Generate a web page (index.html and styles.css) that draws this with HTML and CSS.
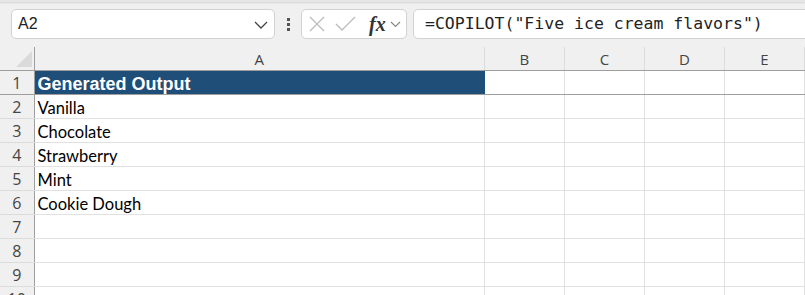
FILE: index.html
```html
<!DOCTYPE html>
<html lang="en">
  <head>
    <meta charset="UTF-8" />
    <title>Copilot sheet</title>
    <link rel="stylesheet" href="styles.css">
  </head>
  <body>
    <div class="ribbon-edge"></div>

    <div class="formula-bar">
      <div class="name-box">
        <span>A2</span>
        <svg class="chevron" width="14" height="8" viewBox="0 0 14 8">
          <path d="M1 1 L7 7 L13 1" fill="none" stroke="#444" stroke-width="1.3" />
        </svg>
      </div>

      <div class="more">
        <span></span><span></span><span></span>
      </div>

      <div class="fx-buttons">
        <svg width="18" height="18" viewBox="0 0 18 18">
          <path d="M2 2 L16 16 M16 2 L2 16" stroke="#bdbdbd" stroke-width="1.4" />
        </svg>
        <svg width="21" height="18" viewBox="0 0 21 18">
          <path d="M1 9 L7 15 L20 2" fill="none" stroke="#bdbdbd" stroke-width="1.4" />
        </svg>
        <span class="fx">fx</span>
        <svg width="11" height="7" viewBox="0 0 11 7">
          <path d="M1 1 L5.5 5.5 L10 1" fill="none" stroke="#888" stroke-width="1.2" />
        </svg>
      </div>

      <div class="formula-input">=COPILOT("Five ice cream flavors")</div>
    </div>

    <table class="sheet">
      <colgroup>
        <col class="col-rows" />
        <col class="col-a" />
        <col class="col-n" />
        <col class="col-n" />
        <col class="col-n" />
        <col class="col-n" />
      </colgroup>
      <thead>
        <tr>
          <th class="corner"><div class="triangle"></div></th>
          <th>A</th>
          <th>B</th>
          <th>C</th>
          <th>D</th>
          <th>E</th>
        </tr>
      </thead>
      <tbody>
        <tr class="frozen">
          <th>1</th>
          <td class="title">Generated Output</td>
          <td></td><td></td><td></td><td></td>
        </tr>
        <tr><th>2</th><td>Vanilla</td><td></td><td></td><td></td><td></td></tr>
        <tr><th>3</th><td>Chocolate</td><td></td><td></td><td></td><td></td></tr>
        <tr><th>4</th><td>Strawberry</td><td></td><td></td><td></td><td></td></tr>
        <tr><th>5</th><td>Mint</td><td></td><td></td><td></td><td></td></tr>
        <tr><th>6</th><td>Cookie Dough</td><td></td><td></td><td></td><td></td></tr>
        <tr><th>7</th><td></td><td></td><td></td><td></td><td></td></tr>
        <tr><th>8</th><td></td><td></td><td></td><td></td><td></td></tr>
        <tr><th>9</th><td></td><td></td><td></td><td></td><td></td></tr>
        <tr><th>10</th><td></td><td></td><td></td><td></td><td></td></tr>
      </tbody>
    </table>
  </body>
</html>
```

FILE: styles.css
```css
body {
  margin: 0;
  background-color: #f0f0f0;
  font-family: "Open Sans", sans-serif;
  overflow: hidden;
}
.ribbon-edge {
  height: 2px;
  background: #e6e6e6;
  box-shadow: 0 1px 2px rgba(0, 0, 0, 0.12);
}
.formula-bar {
  display: flex;
  align-items: center;
  height: 30px;
  margin-top: 7px;
  padding-left: 11px;
}
.name-box {
  display: flex;
  align-items: center;
  justify-content: space-between;
  box-sizing: border-box;
  width: 264px;
  height: 30px;
  padding: 0 6px 0 6px;
  background: white;
  border: 1px solid #d1d1d1;
  border-radius: 5px;
  font-family: "Liberation Sans", Arial, sans-serif;
  font-size: 16px;
  color: #222;
}
.chevron {
  margin-top: 1px;
}
.more {
  display: flex;
  flex-direction: column;
  gap: 2px;
  width: 26px;
  align-items: center;
}
.more span {
  display: block;
  width: 3px;
  height: 3px;
  background: #555;
}
.fx-buttons {
  display: flex;
  align-items: center;
  box-sizing: border-box;
  width: 106px;
  height: 30px;
  padding-left: 6px;
  gap: 9px;
  background: white;
  border: 1px solid #d1d1d1;
  border-radius: 5px;
}
.fx {
  font-family: "Liberation Serif", "Times New Roman", serif;
  font-style: italic;
  font-weight: bold;
  font-size: 20px;
  color: #333;
  margin-left: 4px;
  margin-right: -5px;
}
.formula-input {
  box-sizing: border-box;
  flex: 1;
  height: 30px;
  margin-left: 6px;
  margin-right: -6px;
  padding-left: 11px;
  line-height: 28px;
  background: white;
  border: 1px solid #d1d1d1;
  border-radius: 5px;
  font-family: "DejaVu Sans Mono", monospace;
  font-size: 16.5px;
  color: #222;
  white-space: nowrap;
}
.sheet {
  margin-top: 8px;
  border-collapse: collapse;
  table-layout: fixed;
  width: 805px;
  background: white;
}
.col-rows {
  width: 34px;
}
.col-a {
  width: 450px;
}
.col-n {
  width: 80px;
}
.sheet th {
  background: #f0f0f0;
  font-weight: normal;
  font-size: 15px;
  color: #444;
  padding: 0;
}
.sheet thead th {
  height: 23px;
  border-right: 1px solid #dcdcdc;
  border-bottom: 1px solid #9e9e9e;
  vertical-align: middle;
  line-height: 20px;
}
.sheet thead th.corner {
  border-right: 1px solid #9e9e9e;
  position: relative;
}
.triangle {
  position: absolute;
  right: 2px;
  bottom: 3px;
  width: 0;
  height: 0;
  border-left: 16px solid transparent;
  border-bottom: 16px solid #dadada;
}
.sheet tbody th {
  height: 23px;
  border-right: 1px solid #9e9e9e;
  border-bottom: 1px solid #dcdcdc;
  font-size: 16px;
  line-height: 20px;
}
.sheet td {
  height: 23px;
  padding: 0 3px 0 3px;
  border-right: 1px solid #e1e1e1;
  border-bottom: 1px solid #e1e1e1;
  font-family: Lato, sans-serif;
  font-size: 16.5px;
  color: #000;
  vertical-align: bottom;
  line-height: 20px;
  white-space: nowrap;
  overflow: hidden;
}
.sheet tr.frozen th,
.sheet tr.frozen td {
  border-bottom: 1px solid #9e9e9e;
}
.sheet td.title {
  background: #1f4e78;
  border-right-color: #1f4e78;
  color: white;
  font-family: "Liberation Sans", Arial, sans-serif;
  font-weight: bold;
  font-size: 18px;
}
```
